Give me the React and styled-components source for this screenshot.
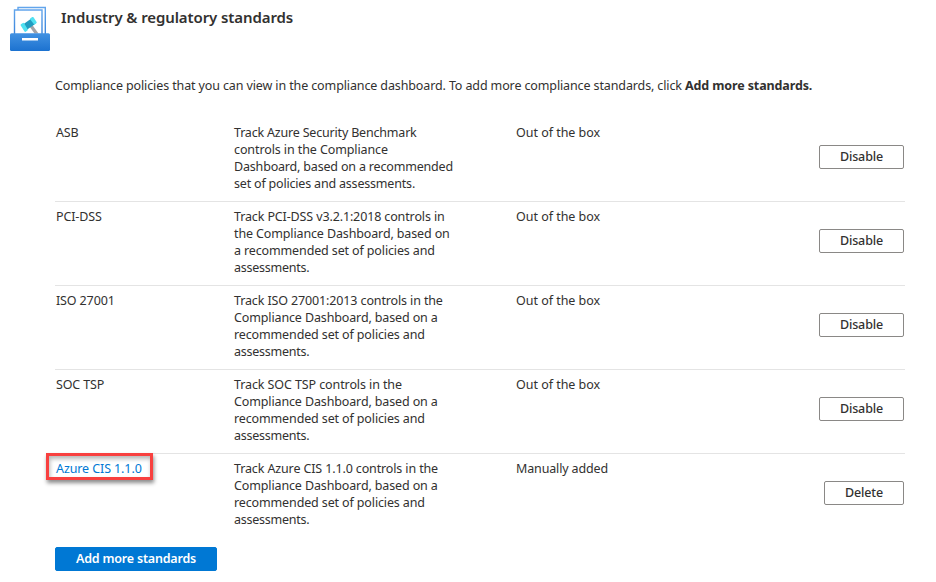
import React from 'react';
import styled, { createGlobalStyle } from 'styled-components';

const Global = createGlobalStyle`
  * { box-sizing: border-box; }
  body {
    margin: 0;
    background: #fff;
    color: #323130;
    font: 12.5px/17px "Noto Sans", "Open Sans", sans-serif;
    letter-spacing: -0.13px;
  }
`;
const Page = styled.main`
  width: 936px;
  height: 582px;
  overflow: hidden;
`;
const Header = styled.header`
  display: flex;
  height: 76px;
  padding: 5px 0 0 8px;
`;
const HeaderIcon = styled.svg`
  flex: none;
  width: 44px;
  height: 48px;
`;
const Title = styled.h1`
  margin: 1px 0 0 9px;
  font-size: 15px;
  line-height: 22px;
  font-weight: 600;
  letter-spacing: -0.1px;
  white-space: nowrap;
`;
const Content = styled.section`
  width: 850px;
  margin-left: 55px;
`;
const Intro = styled.p`
  margin: 0 0 24px;
  height: 18px;
  line-height: 20px;
  letter-spacing: -0.12px;
  white-space: nowrap;
  b { font-weight: 700; }
`;
const Row = styled.div`
  display: grid;
  grid-template-columns: 178px 282px 1fr auto;
  height: 84px;
  padding: 6px 1px 0;
  border-bottom: 1px solid ${(p) => (p.$last ? 'transparent' : '#e4e4e4')};
`;
const Cell = styled.div`
  white-space: nowrap;
`;
const Line = styled.span`
  display: block;
  width: max-content;
  letter-spacing: ${(p) => p.$track ?? -0.13}px;
`;
const Link = styled.a`
  display: block;
  width: 107px;
  height: 27px;
  margin: -7px 0 0 -10px;
  padding: 4px 0 0 7px;
  border: 3px solid #f8403f;
  box-shadow: 1px 3px 4px rgba(0, 0, 0, 0.45), inset 1px 3px 4px rgba(0, 0, 0, 0.28);
  color: #0078d4;
  letter-spacing: -0.1px;
  text-decoration: none;
`;
const Button = styled.button`
  width: ${(p) => p.$width}px;
  height: 24px;
  margin-top: 21px;
  padding: 0;
  border: 1px solid #8a8886;
  border-radius: 2px;
  background: #fff;
  color: #323130;
  font: 500 12.5px/20px "Noto Sans", "Open Sans", sans-serif;
  letter-spacing: -0.13px;
`;
const PrimaryButton = styled(Button)`
  display: block;
  margin-top: 9px;
  border-color: #0078d4;
  background: #0078d4;
  color: #fff;
  font-weight: 600;
  letter-spacing: -0.2px;
`;

/* Each description line is [text, letter spacing]. */
const standards = [
  { name: 'ASB', origin: 'Out of the box', lines: [['Track Azure Security Benchmark', -0.19], ['controls in the Compliance', -0.1], ['Dashboard, based on a recommended', -0.18], ['set of policies and assessments.', -0.19]] },
  { name: 'PCI-DSS', origin: 'Out of the box', lines: [['Track PCI-DSS v3.2.1:2018 controls in'], ['the Compliance Dashboard, based on'], ['a recommended set of policies and'], ['assessments.', -0.25]] },
  { name: 'ISO 27001', origin: 'Out of the box', lines: [['Track ISO 27001:2013 controls in the'], ['Compliance Dashboard, based on a'], ['recommended set of policies and'], ['assessments.', -0.25]] },
  { name: 'SOC TSP', origin: 'Out of the box', lines: [['Track SOC TSP controls in the', -0.1], ['Compliance Dashboard, based on a'], ['recommended set of policies and'], ['assessments.', -0.25]] },
  { name: 'Azure CIS 1.1.0', origin: 'Manually added', custom: true, lines: [['Track Azure CIS 1.1.0 controls in the'], ['Compliance Dashboard, based on a'], ['recommended set of policies and'], ['assessments.', -0.25]] },
];

function ComplianceIcon() {
  return (
    <HeaderIcon viewBox="8 5 44 48" aria-hidden="true">
      <defs>
        <linearGradient id="drawer" x1="0" y1="0" x2="0" y2="1">
          <stop offset="0" stopColor="#4292e2" />
          <stop offset="1" stopColor="#1c72d0" />
        </linearGradient>
        <linearGradient id="sheet" x1="0" y1="0" x2="0" y2="1">
          <stop offset="0" stopColor="#62a5ec" />
          <stop offset="1" stopColor="#3984db" />
        </linearGradient>
      </defs>
      <path d="M18 34V7.5H45.3V34" fill="#fff" stroke="url(#sheet)" strokeWidth="1.4" />
      <path d="M14.5 34V10H42V34" fill="#fff" stroke="url(#sheet)" strokeWidth="1.4" />
      <path d="M29.5 26.5L32 24.5L38.5 33.5H34.5Z" fill="#a3a3a7" />
      <path d="M23.3 24.3L31.7 18.2L35.5 23.7L27.2 29.5Z" fill="#219cc0" />
      <path d="M20.9 24.3L22.9 22.9Q23.6 22.5 24.1 23.2L27.8 29.5Q28.1 30.1 27.4 30.6L25.7 31.8Q25 32.2 24.5 31.5L20.7 25.6Q20.2 24.9 20.9 24.3Z" fill="#50e1f1" />
      <path d="M30.5 18.3L32.2 17.1Q33 16.6 33.5 17.3L36.6 22Q37 22.7 36.3 23.2L35 24.2Q34.3 24.6 33.8 24L30.1 19.3Q29.8 18.7 30.5 18.3Z" fill="#50e1f1" />
      <path d="M11.5 33.2H48.5Q50 33.2 50 34.8V49.4Q50 51 48.5 51H11.5Q10 51 10 49.4V34.8Q10 33.2 11.5 33.2Z" fill="url(#drawer)" />
      <path d="M22 38H38V40.5H22Z" fill="#fff" />
    </HeaderIcon>
  );
}

export default function App() {
  return (
    <Page>
      <Global />
      <Header>
        <ComplianceIcon />
        <Title>Industry &amp; regulatory standards</Title>
      </Header>
      <Content>
        <Intro>
          Compliance policies that you can view in the compliance dashboard. To add more compliance standards, click <b>Add more standards.</b>
        </Intro>
        {standards.map((s) => (
          <Row key={s.name} $last={s.custom}>
            <Cell>{s.custom ? <Link>{s.name}</Link> : s.name}</Cell>
            <Cell>{s.lines.map(([text, track]) => <Line key={text} $track={track}>{text}</Line>)}</Cell>
            <Cell><Line $track={s.custom ? -0.15 : -0.03}>{s.origin}</Line></Cell>
            <Button $width={s.custom ? 80 : 85}>{s.custom ? 'Delete' : 'Disable'}</Button>
          </Row>
        ))}
        <PrimaryButton $width={162}>Add more standards</PrimaryButton>
      </Content>
    </Page>
  );
}
